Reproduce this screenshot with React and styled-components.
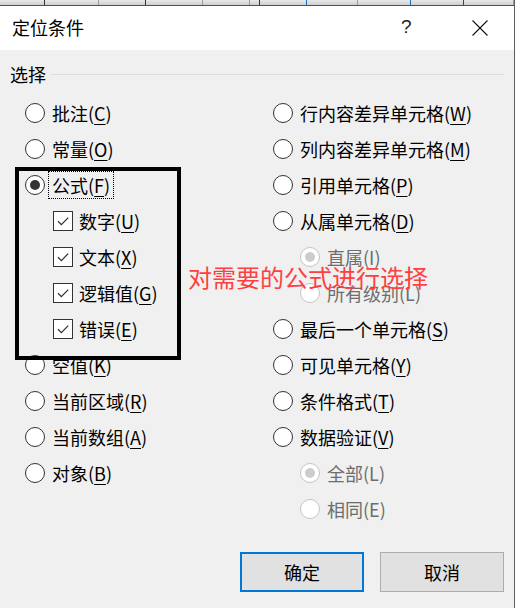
import React from "react";
import styled, { createGlobalStyle, css } from "styled-components";

const Global = createGlobalStyle`
  html, body { margin: 0; padding: 0; overflow: hidden; background: #f0f0f0; }
  * { box-sizing: border-box; }
`;

const FONT = `"Noto Sans CJK SC", "Noto Sans", sans-serif`;

const Window = styled.div`
  position: relative;
  width: 515px;
  height: 608px;
  display: flex;
  flex-direction: column;
  background: #f0f0f0;
  border-right: 1px solid #5e5e5e;
  font-family: ${FONT};
  color: #000;
  font-size: 18px;
`;

const TopStrip = styled.div`
  height: 6px;
  display: flex;
  border-bottom: 1px solid #505050;
`;

const StripCell = styled.div`
  width: ${(p) => p.$w}px;
  flex: none;
  background: linear-gradient(#e8e8e8, #cfcfcf);
  border-right: 1px solid ${(p) => p.$c || "#9c9c9c"};
`;

const TitleBar = styled.div`
  height: 44px;
  background: #fff;
  display: flex;
  align-items: center;
  padding-left: 12px;
  padding-bottom: 3px;
`;

const Title = styled.div`
  font-size: 18px;
  line-height: 24px;
  flex: 1;
`;

const Help = styled.div`
  width: 12px;
  font-size: 19px;
  line-height: 24px;
  font-family: "Liberation Sans", sans-serif;
  font-weight: 300;
  color: #222;
  margin-right: 59px;
`;

const Close = styled.svg`
  width: 16px;
  height: 16px;
  margin-right: 26px;
  margin-top: 2px;
`;

const Body = styled.div`
  flex: 1;
  display: flex;
  flex-direction: column;
`;

const GroupHeader = styled.div`
  margin-top: 12px;
  height: 24px;
  display: flex;
  align-items: center;
  padding-left: 10px;
  padding-right: 10px;
`;

const GroupLabel = styled.span`
  line-height: 24px;
  margin-right: 5px;
`;

const GroupLine = styled.div`
  flex: 1;
  height: 1px;
  background: #dcdcdc;
`;

const Columns = styled.div`
  margin-top: 9px;
  display: flex;
`;

const Column = styled.div`
  width: ${(p) => p.$w}px;
  padding-left: ${(p) => p.$pad}px;
  display: flex;
  flex-direction: column;
`;

const Row = styled.div`
  height: 36px;
  display: flex;
  align-items: center;
  padding-left: ${(p) => p.$indent || 0}px;
`;

const RadioCircle = styled.span`
  width: 20px;
  height: 20px;
  flex: none;
  border-radius: 50%;
  border: 1px solid ${(p) => (p.$disabled ? "#c4c4c4" : "#333")};
  background: #fff;
  display: flex;
  align-items: center;
  justify-content: center;
  margin-right: 7px;
  &::after {
    content: "";
    display: ${(p) => (p.$checked ? "block" : "none")};
    width: 10px;
    height: 10px;
    border-radius: 50%;
    background: ${(p) => (p.$disabled ? "#cccccc" : "#333")};
  }
`;

const CheckBox = styled.span`
  width: 20px;
  height: 20px;
  flex: none;
  border: 1px solid #333;
  background: #fff;
  margin-right: 6px;
  display: flex;
  align-items: center;
  justify-content: center;
`;

const Label = styled.span`
  line-height: 24px;
  margin-top: -1px;
  white-space: nowrap;
  color: ${(p) => (p.$disabled ? "#6d6d6d" : "#000")};
  ${(p) =>
    p.$focus &&
    css`
      outline: 1px dotted #000;
      outline-offset: 1px;
      padding: 0 2px;
      margin-left: -2px;
    `}
`;

const Key = styled.span`
  text-decoration: ${(p) => (p.$plain ? "none" : "underline")};
  text-underline-offset: 3px;
  text-decoration-thickness: 1px;
`;

const Buttons = styled.div`
  margin-top: 25px;
  display: flex;
  justify-content: flex-end;
  gap: 16px;
  padding-right: 10px;
`;

const Button = styled.div`
  width: 124px;
  height: 40px;
  display: flex;
  align-items: center;
  justify-content: center;
  background: #e1e1e1;
  border: ${(p) => (p.$primary ? "2px solid #0078d7" : "1px solid #adadad")};
  font-size: 18px;
`;

const AnnotBox = styled.div`
  position: absolute;
  left: 15px;
  top: 167px;
  width: 166px;
  height: 193px;
  border: 4px solid #000;
  pointer-events: none;
`;

const AnnotText = styled.div`
  position: absolute;
  left: 188px;
  top: 263px;
  font-size: 24px;
  line-height: 28px;
  color: #ff4040;
  white-space: nowrap;
`;

const Check = () => (
  <svg width="14" height="14" viewBox="0 0 14 14">
    <path d="M2 7.2 L5.4 10.6 L12.2 3.6" fill="none" stroke="#333" strokeWidth="1.3" />
  </svg>
);

const Text = ({ name, k, disabled, focus }) => (
  <Label $disabled={disabled} $focus={focus}>
    {name}(<Key $plain={disabled}>{k}</Key>)
  </Label>
);

const Radio = ({ name, k, checked, disabled, focus, indent }) => (
  <Row $indent={indent}>
    <RadioCircle $checked={checked} $disabled={disabled} />
    <Text name={name} k={k} disabled={disabled} focus={focus} />
  </Row>
);

const Checkbox = ({ name, k, indent }) => (
  <Row $indent={indent}>
    <CheckBox>
      <Check />
    </CheckBox>
    <Text name={name} k={k} />
  </Row>
);

const strip = [
  [45, "#333"], [54], [47, "#333"], [57], [47], [10, "#333"], [47, "#2a6fb8"], [51], [53, "#2a6fb8"], [53, "#6b3a1a"], [50],
];

export default function App() {
  return (
    <>
      <Global />
      <Window>
        <TopStrip>
          {strip.map(([w, c], i) => (
            <StripCell key={i} $w={w} $c={c} />
          ))}
        </TopStrip>
        <TitleBar>
          <Title>定位条件</Title>
          <Help>?</Help>
          <Close viewBox="0 0 16 16">
            <path d="M0.5 0.5 L15.5 15.5 M15.5 0.5 L0.5 15.5" stroke="#111" strokeWidth="1.1" />
          </Close>
        </TitleBar>
        <Body>
          <GroupHeader>
            <GroupLabel>选择</GroupLabel>
            <GroupLine />
          </GroupHeader>
          <Columns>
            <Column $w={273} $pad={25}>
              <Radio name="批注" k="C" />
              <Radio name="常量" k="O" />
              <Radio name="公式" k="F" checked focus />
              <Checkbox name="数字" k="U" indent={28} />
              <Checkbox name="文本" k="X" indent={28} />
              <Checkbox name="逻辑值" k="G" indent={28} />
              <Checkbox name="错误" k="E" indent={28} />
              <Radio name="空值" k="K" />
              <Radio name="当前区域" k="R" />
              <Radio name="当前数组" k="A" />
              <Radio name="对象" k="B" />
            </Column>
            <Column $w={241} $pad={0}>
              <Radio name="行内容差异单元格" k="W" />
              <Radio name="列内容差异单元格" k="M" />
              <Radio name="引用单元格" k="P" />
              <Radio name="从属单元格" k="D" />
              <Radio name="直属" k="I" checked disabled indent={27} />
              <Radio name="所有级别" k="L" disabled indent={27} />
              <Radio name="最后一个单元格" k="S" />
              <Radio name="可见单元格" k="Y" />
              <Radio name="条件格式" k="T" />
              <Radio name="数据验证" k="V" />
              <Radio name="全部" k="L" checked disabled indent={27} />
              <Radio name="相同" k="E" disabled indent={27} />
            </Column>
          </Columns>
          <Buttons>
            <Button $primary>确定</Button>
            <Button>取消</Button>
          </Buttons>
        </Body>
        <AnnotBox />
        <AnnotText>对需要的公式进行选择</AnnotText>
      </Window>
    </>
  );
}
